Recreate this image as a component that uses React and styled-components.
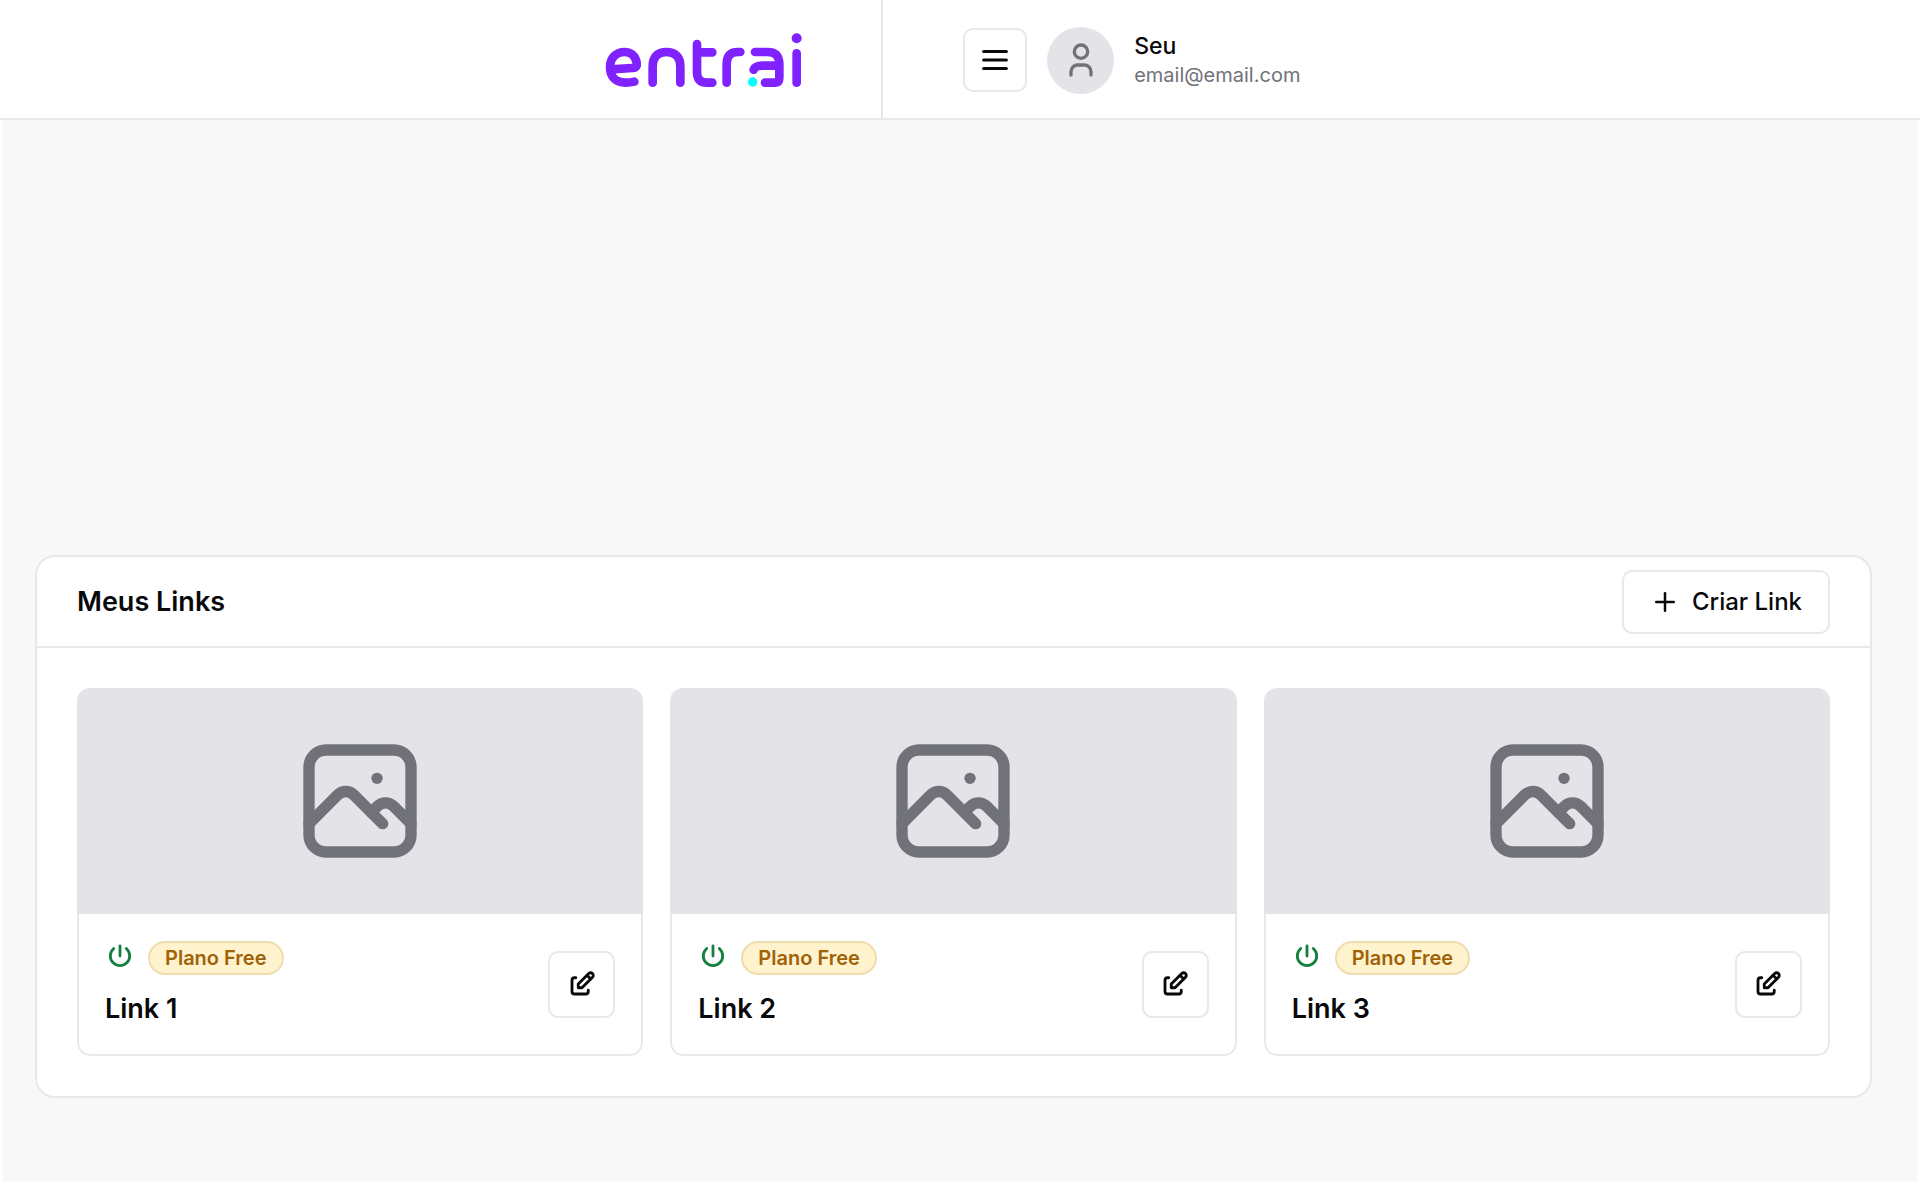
import React from "react";
import styled, { createGlobalStyle } from "styled-components";
import { TbEdit, TbMenu2, TbPhoto, TbPlus, TbPower, TbUser } from "react-icons/tb";

const links = [
  { id: 1, nome: "Link 1", plano: "Plano Free" },
  { id: 2, nome: "Link 2", plano: "Plano Free" },
  { id: 3, nome: "Link 3", plano: "Plano Free" },
];

const Logo = () => (
  <LogoLink href="/" aria-label="entrai">
    <svg width="200" height="60" viewBox="0 0 600 180" fill="none" stroke="#7f22fe" strokeWidth="26" strokeLinecap="round" strokeLinejoin="round">
      <path d="M19 121 L82 117 C94 116 97 110 95 101 C91 81 78 69 59 69 C32 69 15 88 15 115 C15 143 32 161 62 161 C72 161 80 160 88 158" />
      <path d="M143 161 V112 C143 84 157 69 184 69 C212 69 226 84 226 112 V161" />
      <path d="M276 45 V128 C276 151 286 161 307 161 H322 M276 70 H322" />
      <path d="M365 161 V108 C365 81 376 69 398 69 H406" />
      <path d="M450 69 H488 C512 69 523 82 523 107 V146 C523 157 519 161 508 161 H480" />
      <path d="M446 122 C450 113 458 110 472 110 H520" />
      <path d="M575 73 V161" />
      <circle cx="575" cy="28" r="15" fill="#7f22fe" stroke="none" />
      <circle cx="443" cy="159" r="14" fill="#00ffff" stroke="none" />
    </svg>
  </LogoLink>
);

const LinkCard = ({ link }) => {
  return (
    <Card>
      <Capa>
        <TbPhoto size={136} />
      </Capa>
      <CardInfo>
        <div>
          <Status>
            <TbPower size={30} strokeWidth={2.25} />
            <Plano>{link.plano}</Plano>
          </Status>
          <Nome>{link.nome}</Nome>
        </div>
        <IconButton type="button" $size={67} aria-label={`Editar ${link.nome}`}>
          <TbEdit size={30} strokeWidth={2.25} />
        </IconButton>
      </CardInfo>
    </Card>
  );
};

const App = () => {
  return (
    <Pagina>
      <GlobalStyle />
      <Header>
        <LogoArea>
          <Logo />
        </LogoArea>
        <Conta>
          <IconButton type="button" $size={64} aria-label="Menu">
            <TbMenu2 size={34} strokeWidth={2.25} />
          </IconButton>
          <Usuario>
            <Avatar>
              <TbUser size={40} />
            </Avatar>
            <div>
              <UsuarioNome>Seu</UsuarioNome>
              <UsuarioEmail>email@email.com</UsuarioEmail>
            </div>
          </Usuario>
        </Conta>
      </Header>
      <Conteudo>
        <Painel>
          <PainelHeader>
            <Titulo>Meus Links</Titulo>
            <CriarButton type="button">
              <TbPlus size={30} />
              Criar Link
            </CriarButton>
          </PainelHeader>
          <Grade>
            {links.map((link) => (
              <LinkCard key={link.id} link={link} />
            ))}
          </Grade>
        </Painel>
      </Conteudo>
    </Pagina>
  );
};

const GlobalStyle = createGlobalStyle`
  *, *::before, *::after {
    box-sizing: border-box;
  }

  body {
    margin: 0;
    background: #fff;
    color: #09090b;
    font-family: Inter, "Liberation Sans", sans-serif;
  }

  h1, h2, p {
    margin: 0;
  }

  button {
    font: inherit;
    color: inherit;
    cursor: pointer;
  }

  svg {
    display: block;
    flex-shrink: 0;
  }
`;

const Pagina = styled.div`
  display: flex;
  flex-direction: column;
  min-height: 100vh;
`;

const Header = styled.header`
  display: flex;
  height: 120px;
  border-bottom: 2px solid #e8e8ea;
`;

const LogoArea = styled.div`
  display: flex;
  align-items: center;
  justify-content: flex-end;
  width: 46%;
  padding-right: 76px;
  border-right: 2px solid #e8e8ea;
`;

const LogoLink = styled.a`
  display: block;
`;

const Conta = styled.div`
  display: flex;
  align-items: center;
  gap: 20px;
  padding: 2px 0 0 80px;
`;

const Usuario = styled.div`
  display: flex;
  align-items: center;
  gap: 20px;
`;

const Avatar = styled.div`
  display: flex;
  align-items: center;
  justify-content: center;
  width: 67px;
  height: 67px;
  border-radius: 50%;
  background: #e4e4e8;
  color: #71717a;
`;

const UsuarioNome = styled.p`
  font-size: 23px;
  font-weight: 500;
  line-height: 30px;
`;

const UsuarioEmail = styled.p`
  color: #71717a;
  font-size: 20px;
  line-height: 28px;
`;

const IconButton = styled.button`
  display: flex;
  align-items: center;
  justify-content: center;
  width: ${({ $size }) => $size}px;
  height: ${({ $size }) => $size}px;
  padding: 0;
  border: 2px solid #e8e8ea;
  border-radius: 10px;
  background: #fff;
`;

const Conteudo = styled.main`
  flex: 1;
  margin: 0 3px 3px;
  padding: 435px 45px 84px 32px;
  background: #f8f8f8;
`;

const Painel = styled.section`
  border: 2px solid #e8e8ea;
  border-radius: 20px;
  background: #fff;
`;

const PainelHeader = styled.div`
  display: flex;
  align-items: center;
  justify-content: space-between;
  height: 91px;
  padding: 0 40px;
  border-bottom: 2px solid #e8e8ea;
`;

const Titulo = styled.h1`
  font-size: 27px;
  font-weight: 600;
  line-height: 36px;
`;

const CriarButton = styled.button`
  display: flex;
  align-items: center;
  gap: 12px;
  height: 64px;
  padding: 0 26px;
  border: 2px solid #e8e8ea;
  border-radius: 10px;
  background: #fff;
  font-size: 24px;
  font-weight: 500;
`;

const Grade = styled.div`
  display: grid;
  grid-template-columns: repeat(3, 1fr);
  gap: 27px;
  padding: 40px;
`;

const Card = styled.article`
  overflow: hidden;
  border-radius: 13px;
`;

const Capa = styled.div`
  display: flex;
  align-items: center;
  justify-content: center;
  height: 226px;
  background: #e4e4e8;
  color: #71717a;
`;

const CardInfo = styled.div`
  display: flex;
  align-items: center;
  justify-content: space-between;
  height: 142px;
  padding: 0 26px;
  border: 2px solid #e8e8ea;
  border-top: 0;
  border-radius: 0 0 13px 13px;
`;

const Status = styled.div`
  display: flex;
  align-items: flex-start;
  gap: 13px;
  margin-bottom: 16px;
  color: #15803d;
`;

const Plano = styled.span`
  padding: 0 15px;
  border: 2px solid #f0dcae;
  border-radius: 17px;
  background: #fef3cd;
  color: #a16207;
  font-size: 20px;
  font-weight: 600;
  line-height: 30px;
`;

const Nome = styled.h2`
  font-size: 27px;
  font-weight: 600;
  line-height: 36px;
`;

export default App;
